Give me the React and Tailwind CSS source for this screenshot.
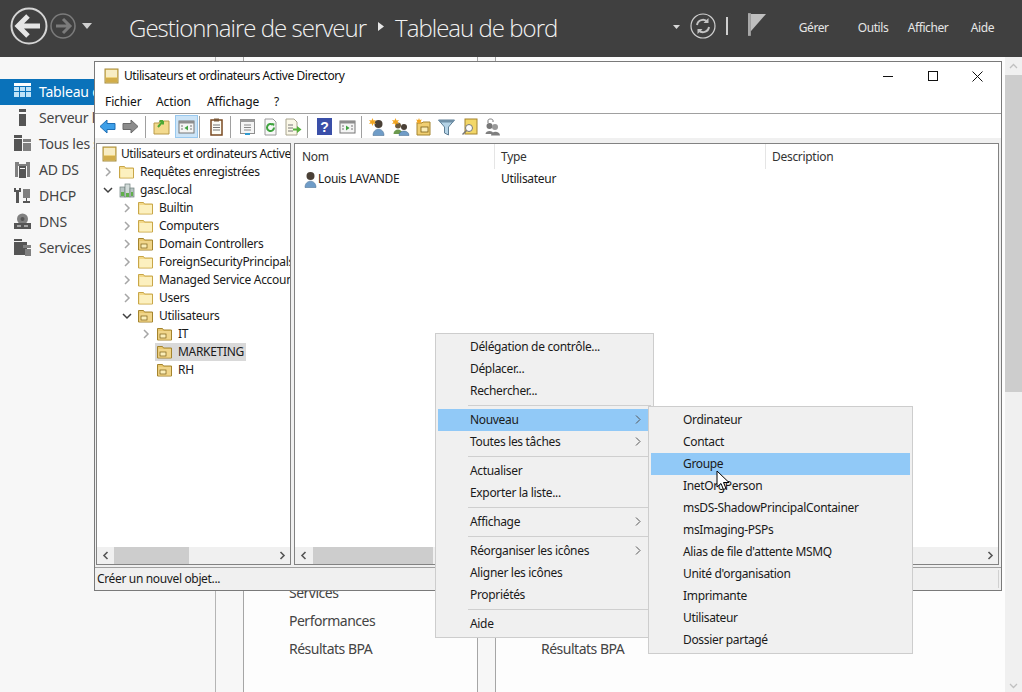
import React from "react";

const F = "font-['Noto_Sans','Open_Sans',sans-serif]";

function Folder({ lock = false }) {
  return (
    <svg width="15" height="14" viewBox="0 0 15 14" className="shrink-0">
      <path d="M0.500 13V1.500h5l1 1.500h8v10z" fill={lock ? "#e9c870" : "#f3d98a"} stroke={lock ? "#a4842e" : "#c8a648"} strokeWidth="1" />
      <path d="M1.500 4h12.500v8.500H1.500z" fill={lock ? "#f0d58a" : "#fcf0bf"} />
      {lock && <rect x="3" y="7" width="6" height="4" fill="#fbeeb8" stroke="#7a5d14" strokeWidth="0.7" />}
    </svg>
  );
}

function Chevron({ open = false, dark = false }) {
  return (
    <svg width="10" height="10" viewBox="0 0 10 10" className="shrink-0">
      <path d={open ? "M1 3l4 4 4-4" : "M3 1l4 4-4 4"} fill="none" stroke={dark ? "#404040" : "#a6a6a6"} strokeWidth="1.500" />
    </svg>
  );
}

function AdIcon() {
  return (
    <svg width="15" height="16" viewBox="0 0 15 16" className="shrink-0">
      <rect x="1" y="1" width="13" height="14" fill="#efd37c" stroke="#a58b3e" />
      <rect x="2" y="2" width="11" height="7" fill="#f8edc4" />
      <rect x="2" y="10" width="11" height="4" fill="#d2ad4a" />
    </svg>
  );
}

function TreeRow({ pad, chev, icon, label, selected }) {
  return (
    <div className="h-[18px] flex items-center whitespace-nowrap" style={{ paddingLeft: pad }}>
      <div className="w-[19px] flex justify-center shrink-0">
        {chev === "closed" && <Chevron />}
        {chev === "open" && <Chevron open dark />}
      </div>
      <div className={"flex items-center h-[18px] pl-[2px] pr-[2px] " + (selected ? "bg-[#d9d9d9]" : "")}>
        <div className="w-[21px] shrink-0 flex justify-start">{icon}</div>
        <span className="text-[12px] text-[#1a1a1a] leading-[18px] tracking-[-0.3px]">{label}</span>
      </div>
    </div>
  );
}

function Domain() {
  return (
    <svg width="16" height="15" viewBox="0 0 16 15" className="shrink-0">
      <rect x="1" y="4" width="5" height="10" fill="#b9c6c4" stroke="#6f7f7c" strokeWidth="0.7" />
      <rect x="6" y="1" width="5" height="13" fill="#d3dcda" stroke="#6f7f7c" strokeWidth="0.7" />
      <rect x="11" y="5" width="4" height="9" fill="#b9c6c4" stroke="#6f7f7c" strokeWidth="0.7" />
      <rect x="2" y="9" width="3" height="4" fill="#61b04b" />
      <rect x="7" y="10" width="3" height="4" fill="#61b04b" />
      <rect x="12" y="9" width="2" height="4" fill="#61b04b" />
    </svg>
  );
}

function UserIcon({ star = false, two = false }) {
  return (
    <svg width="18" height="18" viewBox="0 0 18 18" className="shrink-0">
      {two && <circle cx="6" cy="7.500" r="3" fill="#6b5a3e" />}
      {two && <path d="M1.500 16c0-6 9-6 9 0z" fill="#6c9a4f" />}
      <circle cx={two ? 12 : 9.500} cy={two ? 9 : 6} r={two ? 3 : 4} fill="#4a4036" />
      <path d={two ? "M7 17.500c0-6 10-6 10 0z" : "M4 17.500c0-8.500 11-8.500 11 0z"} fill="#6f9cc7" stroke="#3f6488" strokeWidth="0.5" />
      {star && <path d="M3.500 0l1 2.500L7 2 5.500 4 7 6 4.500 5.500 3.500 8l-1-2.500L0 6l1.500-2L0 2l2.500.5z" fill="#f2a51e" />}
    </svg>
  );
}

function Sep() {
  return <div className="w-px h-[22px] bg-[#a0a0a0] shrink-0" />;
}

function Tool({ children, active }) {
  return (
    <div className={"w-[23px] h-[23px] flex items-center justify-center shrink-0 " + (active ? "bg-[#cce4f7] border border-[#99c9ef]" : "")}>
      {children}
    </div>
  );
}

const Arrow = ({ left, color, edge }) => (
  <svg width="17" height="15" viewBox="0 0 17 15">
    <path d={left ? "M1 7.500L8 1v3.500h8v6H8V14z" : "M16 7.500L9 1v3.500H1v6h8V14z"} fill={color} stroke={edge} strokeWidth="1" />
  </svg>
);

const Doc = ({ children }) => (
  <svg width="17" height="18" viewBox="0 0 17 18">{children}</svg>
);

function Toolbar() {
  return (
    <div className="h-[24px] flex items-center pl-[1px] pt-[1px] bg-white shrink-0">
      <Tool><Arrow left color="#3d9fe8" edge="#1f6fb5" /></Tool>
      <Tool><Arrow color="#8c8c8c" edge="#6a6a6a" /></Tool>
      <div className="w-[3px]" /><Sep /><div className="w-[4px]" />
      <Tool>
        <Doc>
          <path d="M1 5h5l1-2h9v13H1z" fill="#f3da8e" stroke="#b99a48" />
          <path d="M5 9l5-6M10 3H6.500M10 3v3.500" stroke="#4da836" strokeWidth="2" fill="none" />
        </Doc>
      </Tool>
      <div className="w-[2px]" />
      <Tool active>
        <Doc>
          <rect x="1" y="3" width="15" height="12" fill="#f4f4f4" stroke="#777" />
          <rect x="1" y="3" width="15" height="2.500" fill="#8d8d8d" />
          <path d="M10 7.500v5L6.500 10z" fill="#3fa33f" />
          <path d="M3 8h2M3 11h2M12 8h2M12 11h2" stroke="#777" />
        </Doc>
      </Tool>
      <div className="w-[1px]" /><Sep /><div className="w-[5px]" />
      <Tool>
        <Doc>
          <rect x="3" y="2" width="11" height="15" fill="#fdfdf6" stroke="#7a4a22" strokeWidth="1.500" />
          <rect x="6" y="0.500" width="5" height="3" fill="#7a5a3a" />
          <path d="M5 7h7M5 9.500h7M5 12h7" stroke="#777" />
        </Doc>
      </Tool>
      <div className="w-[2px]" /><Sep /><div className="w-[5px]" />
      <Tool>
        <Doc>
          <rect x="1.500" y="1.500" width="14" height="14" fill="#f5f5f5" stroke="#8f8f8f" />
          <rect x="1.500" y="1.500" width="14" height="2.500" fill="#9c9c9c" />
          <path d="M5 7h7M5 9.500h7M5 12h7" stroke="#888" />
          <path d="M6 16h5" stroke="#2f9ad0" strokeWidth="2" />
        </Doc>
      </Tool>
      <Tool>
        <Doc>
          <path d="M3 1h8l3 3v13H3z" fill="#f8f8f8" stroke="#9a9a9a" />
          <path d="M12 9.500a3.500 3.500 0 1 1-1.200-2.600" fill="none" stroke="#3fa33f" strokeWidth="2" />
          <path d="M9.500 5l3 .5-.5 3z" fill="#3fa33f" />
        </Doc>
      </Tool>
      <Tool>
        <Doc>
          <path d="M1 1h8l3 3v13H1z" fill="#fbf8e8" stroke="#a8a48e" />
          <path d="M3 7h5M3 10h5M3 13h5" stroke="#777" />
          <path d="M8 10.500h4V8l4.500 3.500L12 15v-2.500H8z" fill="#55b13b" />
        </Doc>
      </Tool>
      <div className="w-[2px]" /><Sep /><div className="w-[5px]" />
      <Tool>
        <svg width="15" height="17" viewBox="0 0 15 17">
          <rect width="15" height="17" fill="#3a4fa8" />
          <text x="7.500" y="14" fontSize="14" fontWeight="700" textAnchor="middle" fill="#fff" fontFamily="Liberation Sans, sans-serif">?</text>
        </svg>
      </Tool>
      <Tool>
        <Doc>
          <rect x="1" y="3" width="15" height="12" fill="#f4f4f4" stroke="#777" />
          <rect x="1" y="3" width="15" height="2.500" fill="#8d8d8d" />
          <path d="M7 7.500v5l3.500-2.500z" fill="#3fa33f" />
          <path d="M3 8h2M3 11h2M12 8h2M12 11h2" stroke="#777" />
        </Doc>
      </Tool>
      <div className="w-[2px]" /><Sep /><div className="w-[4px]" />
      <Tool><UserIcon star /></Tool>
      <Tool><UserIcon star two /></Tool>
      <Tool>
        <Doc>
          <path d="M2 5h5l1-1h7v13H2z" fill="#f0cf72" stroke="#a4842e" />
          <rect x="6" y="9" width="7" height="5" fill="#fbeeb8" stroke="#7a5d14" strokeWidth="0.8" />
          <path d="M4 0l.8 2L7 1.500 5.700 3.200 7 5 4.800 4.500 4 6.500 3.200 4.500 1 5l1.300-1.800L1 1.500l2.200.5z" fill="#f2a51e" />
        </Doc>
      </Tool>
      <Tool>
        <Doc>
          <path d="M0.500 2h16l-6 7v8l-4-2V9z" fill="#b5d3e6" stroke="#5f7f96" />
          <path d="M0.500 2h16l-1.500 2.500h-13z" fill="#6f8fa6" />
        </Doc>
      </Tool>
      <Tool>
        <Doc>
          <rect x="4" y="1" width="12" height="15" fill="#f3d768" stroke="#a4842e" />
          <circle cx="8" cy="10" r="3.500" fill="#fdfdfd" stroke="#777" />
          <path d="M5.500 12.500l-4 4" stroke="#777" strokeWidth="1.500" />
        </Doc>
      </Tool>
      <Tool>
        <Doc>
          <circle cx="5.500" cy="8" r="3" fill="#777" />
          <circle cx="11" cy="9" r="3" fill="#999" />
          <path d="M1.500 16c0-4 8-4 8 0zM7 17.500c0-5 9-5 9 0z" fill="#7f7f7f" />
          <path d="M4 5V2.500C4 0.500 9 0.500 9 2.500V4" fill="none" stroke="#777" />
        </Doc>
      </Tool>
    </div>
  );
}

function HScroll({ thumbLeft, thumbWidth }) {
  return (
    <div className="h-[17px] bg-[#f0f0f0] flex items-center shrink-0 relative">
      <div className="w-[17px] flex justify-center"><Chev2 dir="l" /></div>
      <div className="h-[17px] bg-[#cdcdcd]" style={{ width: thumbWidth, marginLeft: thumbLeft }} />
      <div className="flex-1" />
      <div className="w-[17px] flex justify-center"><Chev2 dir="r" /></div>
    </div>
  );
}

function Chev2({ dir }) {
  return (
    <svg width="8" height="9" viewBox="0 0 8 9">
      <path d={dir === "l" ? "M5.500 1L2 4.500 5.500 8" : "M2.500 1L6 4.500 2.500 8"} fill="none" stroke="#555" strokeWidth="1.600" />
    </svg>
  );
}

function ADWindow() {
  return (
    <div className={"absolute left-[94px] top-[61px] w-[908px] h-[530px] border border-[#7a7a7a] bg-[#f0f0f0] flex flex-col " + F}>
      <div className="h-[28px] bg-white flex items-center pl-[9px] shrink-0">
        <AdIcon />
        <span className="ml-[5px] text-[12px] text-[#111] tracking-[-0.42px]">Utilisateurs et ordinateurs Active Directory</span>
        <div className="ml-auto flex items-center h-full">
          <div className="w-[45px] flex justify-center"><div className="w-[10px] h-px bg-[#111]" /></div>
          <div className="w-[45px] flex justify-center"><div className="w-[10px] h-[10px] border border-[#111]" /></div>
          <div className="w-[45px] flex justify-center mr-[1px]">
            <svg width="11" height="11" viewBox="0 0 11 11"><path d="M0.500 0.500l10 10M10.500 0.500l-10 10" stroke="#111" /></svg>
          </div>
        </div>
      </div>
      <div className="h-[24px] bg-white border-b border-[#a0a0a0] flex items-center pl-[10px] shrink-0 text-[12px] text-[#111] tracking-[-0.1px]">
        <span className="w-[51px]">Fichier</span>
        <span className="w-[51px]">Action</span>
        <span className="w-[67px]">Affichage</span>
        <span>?</span>
      </div>
      <Toolbar />
      <div className="flex-1 flex gap-[3px] pt-[5px] px-[1px] min-h-0">
        <div className="w-[195px] border border-[#828282] bg-white flex flex-col">
          <div className="flex-1 pt-px overflow-hidden">
            <div className="h-[18px] flex items-center pl-[5px] whitespace-nowrap overflow-hidden">
              <AdIcon />
              <span className="ml-[4px] text-[12px] text-[#1a1a1a] tracking-[-0.42px]">Utilisateurs et ordinateurs Active Directory</span>
            </div>
            <TreeRow pad={1} chev="closed" icon={<Folder />} label="Requêtes enregistrées" />
            <TreeRow pad={1} chev="open" icon={<Domain />} label="gasc.local" />
            <TreeRow pad={20} chev="closed" icon={<Folder />} label="Builtin" />
            <TreeRow pad={20} chev="closed" icon={<Folder />} label="Computers" />
            <TreeRow pad={20} chev="closed" icon={<Folder lock />} label="Domain Controllers" />
            <TreeRow pad={20} chev="closed" icon={<Folder />} label="ForeignSecurityPrincipals" />
            <TreeRow pad={20} chev="closed" icon={<Folder />} label="Managed Service Accounts" />
            <TreeRow pad={20} chev="closed" icon={<Folder />} label="Users" />
            <TreeRow pad={20} chev="open" icon={<Folder lock />} label="Utilisateurs" />
            <TreeRow pad={39} chev="closed" icon={<Folder lock />} label="IT" />
            <TreeRow pad={39} chev="" icon={<Folder lock />} label="MARKETING" selected />
            <TreeRow pad={39} chev="" icon={<Folder lock />} label="RH" />
          </div>
          <HScroll thumbLeft={0} thumbWidth={75} />
        </div>
        <div className="flex-1 border border-[#828282] bg-white flex flex-col min-w-0 mr-[1px]">
          <div className="h-[25px] flex shrink-0 text-[12px] text-[#333] tracking-[-0.3px] items-center">
            <div className="w-[200px] pl-[7px] h-full flex items-center border-r border-[#e5e5e5]">Nom</div>
            <div className="w-[271px] pl-[6px] h-full flex items-center border-r border-[#e5e5e5]">Type</div>
            <div className="pl-[6px]">Description</div>
          </div>
          <div className="flex-1">
            <div className="h-[20px] flex items-center pl-[6px] text-[12px] text-[#1a1a1a] tracking-[-0.3px]">
              <div className="w-[17px]"><UserIcon /></div>
              <span className="w-[183px]">Louis LAVANDE</span>
              <span>Utilisateur</span>
            </div>
          </div>
          <HScroll thumbLeft={1} thumbWidth={120} />
        </div>
      </div>
      <div className="h-[23px] mt-[2px] border-t border-[#a0a0a0] bg-[#f0f0f0] flex items-center pl-[2px] shrink-0 text-[12px] text-[#1a1a1a] tracking-[-0.35px]">
        Créer un nouvel objet...
        <div className="ml-auto w-px h-[18px] bg-[#d0d0d0] mr-[2px]" />
      </div>
    </div>
  );
}

function MI({ label, arrow, hi }) {
  return (
    <div className={"h-[22px] flex items-center pl-[32px] text-[12px] text-[#1a1a1a] tracking-[-0.33px] relative " + (hi ? "bg-[#91c9f7]" : "")}>
      {label}
      {arrow && (
        <svg width="6" height="9" viewBox="0 0 6 9" className="absolute right-[10px] top-[6px]">
          <path d="M1 0.500L5 4.500 1 8.500" fill="none" stroke="#555" />
        </svg>
      )}
    </div>
  );
}

function MSep() {
  return (
    <div className="h-[7px] flex items-center ml-[30px] shrink-0">
      <div className="h-px w-full bg-[#cfcfcf]" />
    </div>
  );
}

function Menus() {
  return (
    <>
      <div className={"absolute left-[435px] top-[333px] w-[219px] h-[305px] bg-[#f0f0f0] border border-[#cdcdcd] p-[2px] " + F}>
        <MI label="Délégation de contrôle..." />
        <MI label="Déplacer..." />
        <MI label="Rechercher..." />
        <MSep />
        <MI label="Nouveau" arrow hi />
        <MI label="Toutes les tâches" arrow />
        <MSep />
        <MI label="Actualiser" />
        <MI label="Exporter la liste..." />
        <MSep />
        <MI label="Affichage" arrow />
        <MSep />
        <MI label="Réorganiser les icônes" arrow />
        <MI label="Aligner les icônes" />
        <MI label="Propriétés" />
        <MSep />
        <MI label="Aide" />
      </div>
      <div className={"absolute left-[648px] top-[406px] w-[265px] h-[248px] bg-[#f0f0f0] border border-[#cdcdcd] p-[2px] " + F}>
        {["Ordinateur", "Contact", "Groupe", "InetOrgPerson", "msDS-ShadowPrincipalContainer", "msImaging-PSPs", "Alias de file d'attente MSMQ", "Unité d'organisation", "Imprimante", "Utilisateur", "Dossier partagé"].map((l) => (
          <MI key={l} label={l} hi={l === "Groupe"} />
        ))}
      </div>
      <svg width="14" height="21" viewBox="0 0 14 21" className="absolute left-[716px] top-[470px]">
        <path d="M1 1v16l4-3.500 2.500 6 2.500-1-2.500-6H13z" fill="#fff" stroke="#000" strokeWidth="1" />
      </svg>
    </>
  );
}

const D = "#555555";
const L = "#808080";

const sideItems = [
  ["Tableau de bord", true, <>
    <path d="M0 0h17v3H0z" fill="#fff" />
    <path d="M0 4h5v4H0zM6 4h5v4H6zM12 4h5v4h-5zM0 9h5v5H0zM6 9h5v5H6zM12 9h5v5h-5z" fill="#bfe3f8" />
  </>],
  ["Serveur local", false, <path d="M5 0h7v3H5zM5 5h7v12H5z" fill={D} />],
  ["Tous les serveurs", false, <>
    <path d="M0 0h8v3H0zM0 4h8v12H0z" fill={D} />
    <path d="M9 4h8v3H9zM9 8h8v8H9z" fill={L} />
  </>],
  ["AD DS", false, <>
    <path d="M1 1h4v2h7V1h4v15h-3V5H4v11H1z" fill={L} />
    <path d="M5 5h7v12H5z" fill={D} />
    <path d="M6 7h5v1H6z" fill="#f7f7f7" />
  </>],
  ["DHCP", false, <>
    <path d="M0 1h2v2h3V1h2v4H5v11H2V5H0z" fill={D} />
    <path d="M9 2h7v9H9z" fill={L} />
    <path d="M12 11h1v3h3v2H9v-2h3z" fill={D} />
  </>],
  ["DNS", false, <>
    <circle cx="8.500" cy="6" r="5.500" fill={L} />
    <circle cx="8.500" cy="6" r="2" fill={D} />
    <path d="M0 10h17v6H0z" fill={D} />
    <path d="M3 12.500h4v1H3zM10 12.500h4v1h-4z" fill="#f7f7f7" />
  </>],
  ["Services de fichiers", false, <>
    <path d="M0 0h8v2h-8zM0 3h13v13H0z" fill={D} />
    <path d="M9 6h8v3H9zM11 10h6v7h-6z" fill={L} />
  </>],
];

export default function App() {
  return (
    <div className={"relative w-full h-screen overflow-hidden bg-[#f7f7f7] flex flex-col " + F}>
      <header className="h-[57px] bg-[#404040] flex items-center shrink-0">
        <div className="flex items-center pl-[10px] mb-[5px]">
          <svg width="38" height="38" viewBox="0 0 38 38">
            <circle cx="19" cy="19" r="17.500" fill="none" stroke="#d4d4d4" strokeWidth="2" />
            <path d="M8 19h22M18 9l-10 10 10 10" fill="none" stroke="#e6e6e6" strokeWidth="5" />
          </svg>
          <svg width="26" height="26" viewBox="0 0 26 26" className="ml-[2px]">
            <circle cx="13" cy="13" r="12" fill="none" stroke="#7b7b7b" strokeWidth="1.500" />
            <path d="M20 13H6M13 6l7 7-7 7" fill="none" stroke="#7b7b7b" strokeWidth="3" />
          </svg>
          <svg width="10" height="6" viewBox="0 0 10 6" className="ml-[6px]"><path d="M0 0h10L5 6z" fill="#cfcfcf" /></svg>
        </div>
        <div className="ml-[37px] mb-[1px] flex items-center text-[24px] font-light text-[#f2f2f2] font-['Open_Sans',sans-serif] tracking-[-0.98px] whitespace-nowrap">
          <span>Gestionnaire de serveur</span>
          <svg width="6" height="9" viewBox="0 0 6 9" className="ml-[12px] mr-[11px] mb-[3px]"><path d="M0 0l6 4.500L0 9z" fill="#e6e6e6" /></svg>
          <span>Tableau de bord</span>
        </div>
        <div className="ml-auto flex items-center h-full">
          <svg width="7" height="4" viewBox="0 0 7 4" className="mb-[3px]"><path d="M0 0h7L3.500 4z" fill="#d8d8d8" /></svg>
          <svg width="26" height="26" viewBox="0 0 26 26" className="ml-[10px] mb-[5px]">
            <circle cx="13" cy="13" r="12" fill="none" stroke="#cfcfcf" strokeWidth="1.200" />
            <path d="M7 12a6 6 0 0 1 10.500-3M19 14a6 6 0 0 1-10.500 3" fill="none" stroke="#c4c4c4" strokeWidth="2" />
            <path d="M18.500 5v5h-5zM7.500 21v-5h5z" fill="#c4c4c4" />
          </svg>
          <div className="w-[2px] h-[18px] bg-[#cfcfcf] ml-[10px] mb-[5px]" />
          <svg width="18" height="23" viewBox="0 0 19 24" className="ml-[20px] mb-[8px]">
            <path d="M0 0h3v24H0z" fill="#a8a8a8" />
            <path d="M3 1h16l-16 18z" fill="#bfbfbf" />
          </svg>
          <div className="flex text-[12px] text-[#e6e6e6] tracking-[-0.4px] ml-[33px] mr-[28px] mb-[2px] items-center">
            <span className="w-[59px]">Gérer</span>
            <span className="w-[50px]">Outils</span>
            <span className="w-[63px]">Afficher</span>
            <span>Aide</span>
          </div>
        </div>
      </header>
      <div className="flex-1 flex min-h-0">
        <aside className="w-[216px] border-r border-[#b5b5b5] bg-[#f7f7f7] pt-[22px] shrink-0">
          {sideItems.map(([l, hi, icon]) => (
            <div key={l} className={"h-[26px] pb-[1px] flex items-center pl-[14px] text-[14px] whitespace-nowrap tracking-[-0.2px] " + (hi ? "bg-[#0a72ba] text-white" : "text-[#444]")}>
              <svg width="17" height="17" viewBox="0 0 17 17" className="shrink-0">{icon}</svg>
              <span className="ml-[8px]">{l}</span>
            </div>
          ))}
        </aside>
        <main className="flex-1 flex items-stretch pl-[27px] bg-[#f7f7f7] min-w-0">
          <section className="w-[235px] border-x border-[#a6a6a6] bg-[#fdfdfd] flex flex-col justify-end pb-[30px] pl-[45px] text-[14px] text-[#444] tracking-[-0.5px] shrink-0">
            <div className="h-[28px] flex items-center">Services</div>
            <div className="h-[28px] flex items-center">Performances</div>
            <div className="h-[28px] flex items-center">Résultats BPA</div>
          </section>
          <section className="ml-[17px] flex-1 border-l border-[#a6a6a6] bg-[#fdfdfd] flex flex-col justify-end pb-[30px] pl-[45px] text-[14px] text-[#444] tracking-[-0.5px]">
            <div className="h-[28px] flex items-center">Résultats BPA</div>
          </section>
        </main>
        <div className="w-[17px] bg-[#f0f0f0] flex flex-col items-center shrink-0">
          <div className="h-[18px] flex items-center"><svg width="9" height="6" viewBox="0 0 9 6"><path d="M1 5l3.500-3.500L8 5" fill="none" stroke="#c0c0c0" strokeWidth="1.300" /></svg></div>
          <div className="w-full h-[317px] bg-[#cdcdcd]" />
          <div className="mt-auto h-[12px] flex items-center"><svg width="9" height="6" viewBox="0 0 9 6"><path d="M1 1l3.500 3.500L8 1" fill="none" stroke="#c0c0c0" strokeWidth="1.300" /></svg></div>
        </div>
      </div>
      <ADWindow />
      <Menus />
    </div>
  );
}
